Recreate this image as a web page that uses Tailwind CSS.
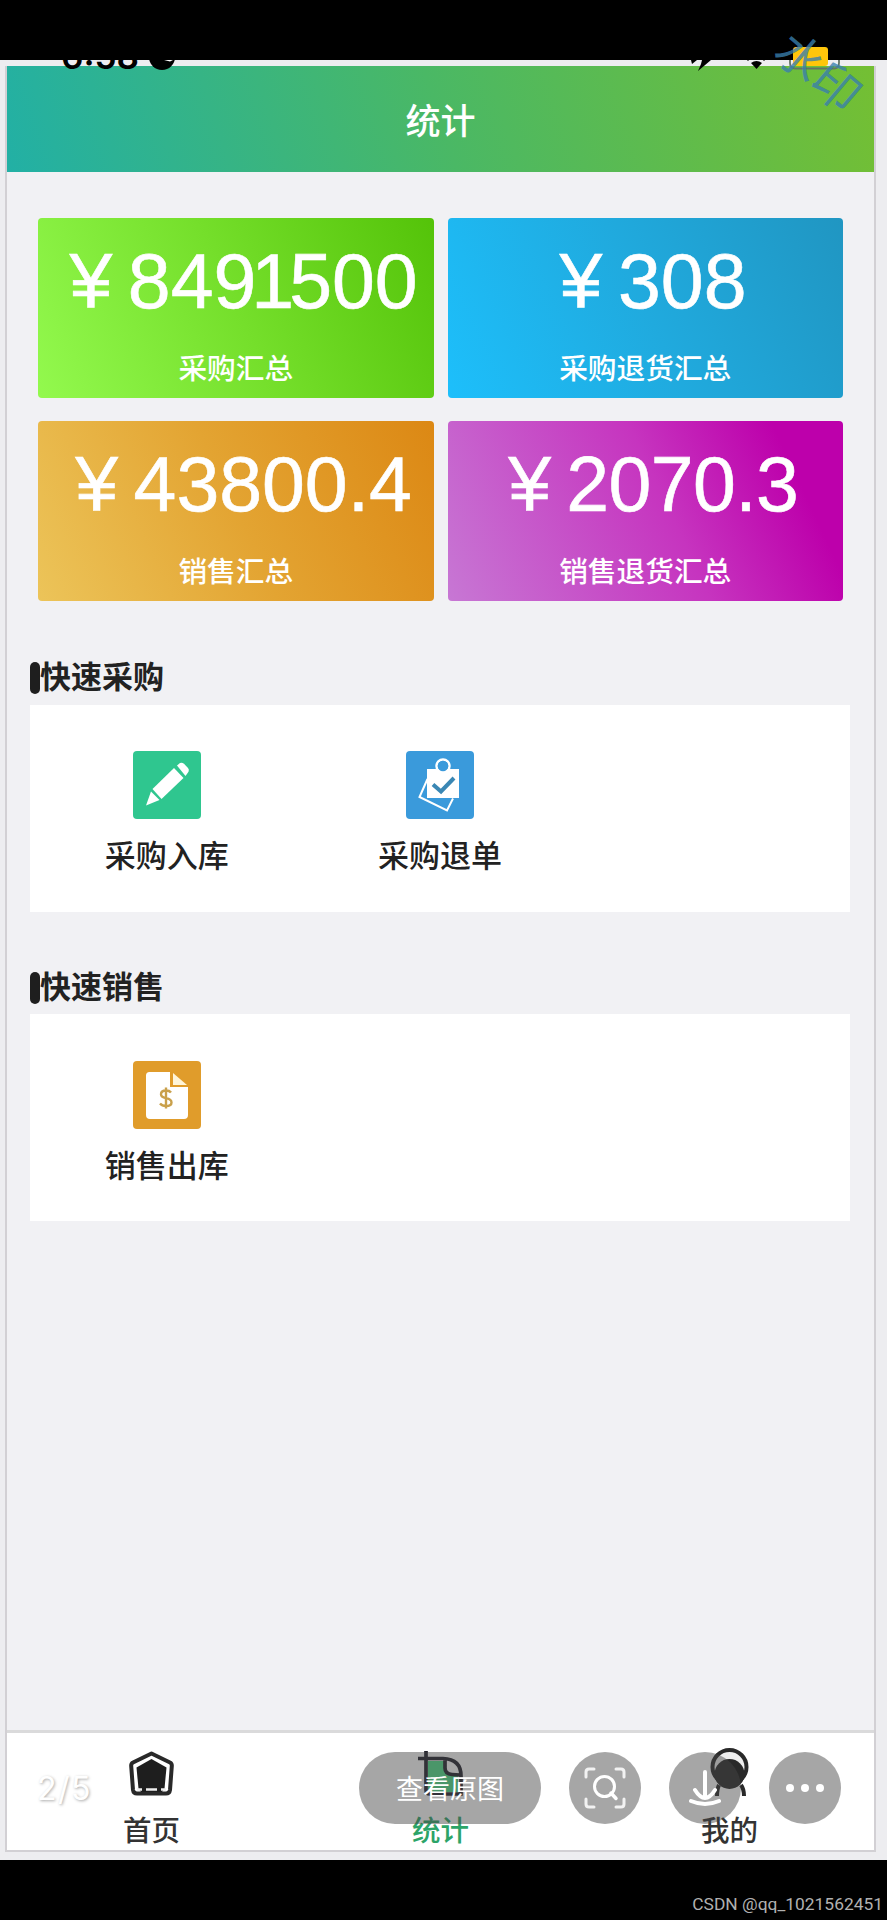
<!DOCTYPE html>
<html lang="zh-CN">
<head>
<meta charset="UTF-8">
<title>统计</title>
<script src="https://cdn.jsdelivr.net/npm/@tailwindcss/browser@4"></script>
</head>
<body class="bg-black font-['Liberation_Sans','Noto_Sans_CJK_SC',sans-serif]">
<div class="relative flex h-[1920px] w-[887px] flex-col overflow-hidden bg-black pt-[60px]">
  <!-- phone screen -->
  <div class="h-[1800px] bg-[#ededf0] pl-[5px] pr-[11px] pt-[6px]">
    <div class="flex h-[1786px] flex-col border-x-2 border-b-2 border-[#d2d0d4] bg-[#f1f1f4]">
      <header class="flex h-[106px] shrink-0 items-center justify-center bg-linear-[72deg] from-[#22b0a5] via-[#4ab865] to-[#74bf33] pt-[4px] text-[35px] leading-none font-medium text-white">统计</header>

      <main class="flex flex-1 flex-col pt-[46px]">
        <section class="ml-[31px] grid w-[805px] grid-cols-2 gap-x-[14px] gap-y-[23px] text-white">
          <div class="flex h-[180px] flex-col items-center rounded-[4px] bg-linear-[65deg] from-[#93f94e] via-[#75df2b] to-[#54c309]">
            <div class="mt-[21px] flex h-[84px] items-center text-[77px] leading-[84px] whitespace-nowrap [-webkit-text-stroke:0.6px_white]"><span class="w-[74px] text-center">¥</span><span>84<span class="tracking-[-5px]">91</span>500</span></div>
            <div class="mt-[27px] text-[28.700px] leading-[38px] font-medium">采购汇总</div>
          </div>
          <div class="flex h-[180px] flex-col items-center rounded-[4px] bg-linear-[65deg] from-[#1dbffb] via-[#20aade] to-[#2096c2]">
            <div class="mt-[21px] flex h-[84px] items-center text-[77px] leading-[84px] whitespace-nowrap [-webkit-text-stroke:0.6px_white]"><span class="w-[74px] text-center">¥</span><span>308</span></div>
            <div class="mt-[27px] text-[28.700px] leading-[38px] font-medium">采购退货汇总</div>
          </div>
          <div class="flex h-[180px] flex-col items-center rounded-[4px] bg-linear-[65deg] from-[#ecc459] via-[#e3a432] to-[#dc8814]">
            <div class="mt-[21px] flex h-[84px] items-center text-[77px] leading-[84px] whitespace-nowrap [-webkit-text-stroke:0.6px_white]"><span class="w-[74px] text-center">¥</span><span>43800.4</span></div>
            <div class="mt-[27px] text-[28.700px] leading-[38px] font-medium">销售汇总</div>
          </div>
          <div class="flex h-[180px] flex-col items-center rounded-[4px] bg-linear-[65deg] from-[#c777d4] via-[#c634bf] via-55% to-[#bd00ab] to-85%">
            <div class="mt-[21px] flex h-[84px] items-center text-[77px] leading-[84px] tracking-[-0.600px] whitespace-nowrap [-webkit-text-stroke:0.6px_white]"><span class="w-[74px] text-center">¥</span><span>2070.3</span></div>
            <div class="mt-[27px] text-[28.700px] leading-[38px] font-medium">销售退货汇总</div>
          </div>
        </section>

        <section class="mt-[58px] ml-[23px] w-[820px] text-[#222]">
          <h2 class="flex h-[38px] items-center text-[31px] leading-[38px] font-bold"><span class="h-[32px] w-[10px] rounded-[5px] bg-[#1e1e1e]"></span>快速采购</h2>
          <div class="mt-[8px] grid h-[207px] grid-cols-3 bg-white pt-[46px]">
            <div class="flex flex-col items-center">
              <svg class="size-[68px]" viewBox="0 0 68 68"><rect width="68" height="68" rx="4" fill="#2fc68f"/><g fill="#fff"><path d="M44 14.500l3-2.500q2-1 4 .8l4 4.200q1.500 1.800.5 3.700l-3 4.300z"/><path d="M41 17l9.500 10L28.500 48 19.500 38z"/><path d="M18 40.500L26.500 49 13 54.500z"/></g></svg>
              <div class="mt-[17px] text-[31px] leading-[42px] font-medium">采购入库</div>
            </div>
            <div class="flex flex-col items-center">
              <svg class="size-[68px]" viewBox="0 0 68 68"><rect width="68" height="68" rx="4" fill="#3a9adb"/><g fill="none" stroke="#fff"><circle cx="37" cy="15" r="6.500" stroke-width="2.500"/><path d="M21.500 28L13.500 46 41 59.500l6-12" stroke-width="2"/></g><path d="M21 18h32v29H21z" fill="#fff"/><circle cx="37" cy="15" r="5.300" fill="#3a9adb"/><path d="M27 33.500l8 7L48 27" fill="none" stroke="#3a87b4" stroke-width="4"/></svg>
              <div class="mt-[17px] text-[31px] leading-[42px] font-medium">采购退单</div>
            </div>
          </div>
        </section>

        <section class="mt-[57px] ml-[23px] w-[820px] text-[#222]">
          <h2 class="flex h-[38px] items-center text-[31px] leading-[38px] font-bold"><span class="h-[32px] w-[10px] rounded-[5px] bg-[#1e1e1e]"></span>快速销售</h2>
          <div class="mt-[7px] grid h-[207px] grid-cols-3 bg-white pt-[47px]">
            <div class="flex flex-col items-center">
              <svg class="size-[68px]" viewBox="0 0 68 68"><rect width="68" height="68" rx="4" fill="#e09c2b"/><path d="M16.500 11H37v15h18v28q0 4-4 4H17q-4 0-4-4V14.500q0-3.500 3.500-3.500z" fill="#fff"/><path d="M40 12l14 12H40z" fill="#fff5d8"/><path d="M38 31.500q-1.500-2-5-2-5 0-5 3.800 0 2.900 5 3.800 5.500 1 5.500 4.400 0 3.500-5.500 3.500-4 0-6-2.500M33 26.500v21" fill="none" stroke="#c9a04b" stroke-width="2.400"/></svg>
              <div class="mt-[17px] text-[31px] leading-[42px] font-medium">销售出库</div>
            </div>
          </div>
        </section>
      </main>

      <nav class="grid h-[120px] shrink-0 grid-cols-3 border-t-3 border-[#dadadb] bg-white pt-[18px] text-[28.500px] leading-[38px] font-medium text-[#333]">
        <div class="flex flex-col items-center">
          <svg class="h-[45px] w-[45px]" viewBox="0 0 45 45"><path d="M22.500 2.500L41 11.500Q43 12.500 42.800 15L41 39q-.5 3.500-4 3.500H8Q4.500 42.500 4 39L2.200 15Q2 12.500 4 11.500z" fill="#fff" stroke="#292929" stroke-width="4" stroke-linejoin="round"/><path d="M22.500 8L37.500 16.500 35.500 37.500 33 41H12L9.500 37.500 7.500 16.500z" fill="#1e1e1e"/><path d="M8 38.500h5M17 38.500h11M32 38.500h5" stroke="#eee" stroke-width="2.500"/></svg>
          <div class="mt-[16px]">首页</div>
        </div>
        <div class="flex flex-col items-center text-[#2ca468]">
          <svg class="h-[45px] w-[45px]" viewBox="0 0 45 45"><path d="M10 10h16l2 8q2 7 12 7v16H10z" fill="#4fe08a"/><path d="M0 7.500h25Q43 8 43 25v18H12q-4 0-4-4V0M27 9v8q0 6 7 6.500l8 .5" fill="none" stroke="#22222c" stroke-width="3.700"/></svg>
          <div class="mt-[16px]">统计</div>
        </div>
        <div class="flex flex-col items-center">
          <svg class="h-[45px] w-[45px] overflow-visible" viewBox="0 0 45 45"><circle cx="22.500" cy="16" r="17" fill="#eee" stroke="#292929" stroke-width="4"/><circle cx="22.500" cy="23" r="15" fill="#292929"/><path d="M12 34q-2 4-2 11M34 34q3 4 3 11" fill="none" stroke="#292929" stroke-width="4"/></svg>
          <div class="mt-[16px]">我的</div>
        </div>
      </nav>
    </div>
  </div>
  <footer class="flex h-[60px] items-end justify-end pr-[4px] pb-[4px] font-['Roboto'] text-[17.400px] leading-[24px] text-[#b1b1b1]">CSDN @qq_1021562451</footer>

  <!-- system status bar, partly hidden by the black band -->
  <div class="absolute top-[36px] left-[61px] font-['Inter'] text-[35px] leading-[40px] font-semibold text-black">6:58</div>
  <svg class="absolute top-[40px] left-0 h-[36px] w-[887px]" viewBox="0 40 887 36">
    <circle cx="162" cy="57" r="13" fill="#000"/><path d="M164 60h9l-3 1.500z" fill="#fff"/>
    <path d="M691 60l6 0-5 4zM702 60h9l-13 11 3-7z"/><path d="M751 63q5.500-4 11 0l-5.500 6z"/><path d="M748 61v-1M764 61v-1" stroke="#000"/>
    <path d="M790 60v3q0 5.500 5 5.500h39q5 0 5-5.500v-3" fill="none" stroke="#627466" stroke-width="1.800"/>
    <rect x="793" y="47" width="35" height="19" rx="3" fill="#ffc60b"/>
  </svg>
  <div class="absolute top-[45px] left-[769px] w-[102px] rotate-[40deg] text-center font-['Noto_Sans_CJK_SC'] text-[47px] leading-[50px] font-normal text-[#397fae]/80">水印</div>

  <!-- image viewer controls -->
  <div class="absolute top-[1771px] left-[37px] font-['Inter'] text-[32px] leading-[36px] tracking-[1.500px] text-white [text-shadow:1px_1px_3px_#aaa]">2/5</div>
  <div class="absolute top-[1752px] left-[359px] flex items-center">
    <div class="flex h-[72px] w-[182px] items-center justify-center rounded-full bg-[#464646]/48 pt-[4px] text-[27px] leading-none text-white">查看原图</div>
    <div class="ml-[28px] size-[72px] rounded-full bg-[#464646]/48"><svg viewBox="0 0 72 72" fill="none" stroke="#fff" stroke-width="3" stroke-linecap="round"><path d="M17 25v-5q0-3 3-3h5M47 17h5q3 0 3 3v5M17 47v5q0 3 3 3h5M47 55h5q3 0 3-3v-5" opacity=".85"/><circle cx="35.500" cy="34.500" r="10"/><path d="M42 41l5 5.500" stroke-width="3.500"/></svg></div>
    <div class="ml-[28px] size-[72px] rounded-full bg-[#464646]/48"><svg viewBox="0 0 72 72" fill="none" stroke="#fff" stroke-width="4" stroke-linecap="round" stroke-linejoin="round"><path d="M36 20v25M26 38q5 8 10 8t10-8M22 49q14 6 28 0"/></svg></div>
    <div class="ml-[28px] flex size-[72px] items-center justify-center gap-[7px] rounded-full bg-[#464646]/48"><i class="size-[8px] rounded-full bg-white"></i><i class="size-[8px] rounded-full bg-white"></i><i class="size-[8px] rounded-full bg-white"></i></div>
  </div>
</div>
</body>
</html>
